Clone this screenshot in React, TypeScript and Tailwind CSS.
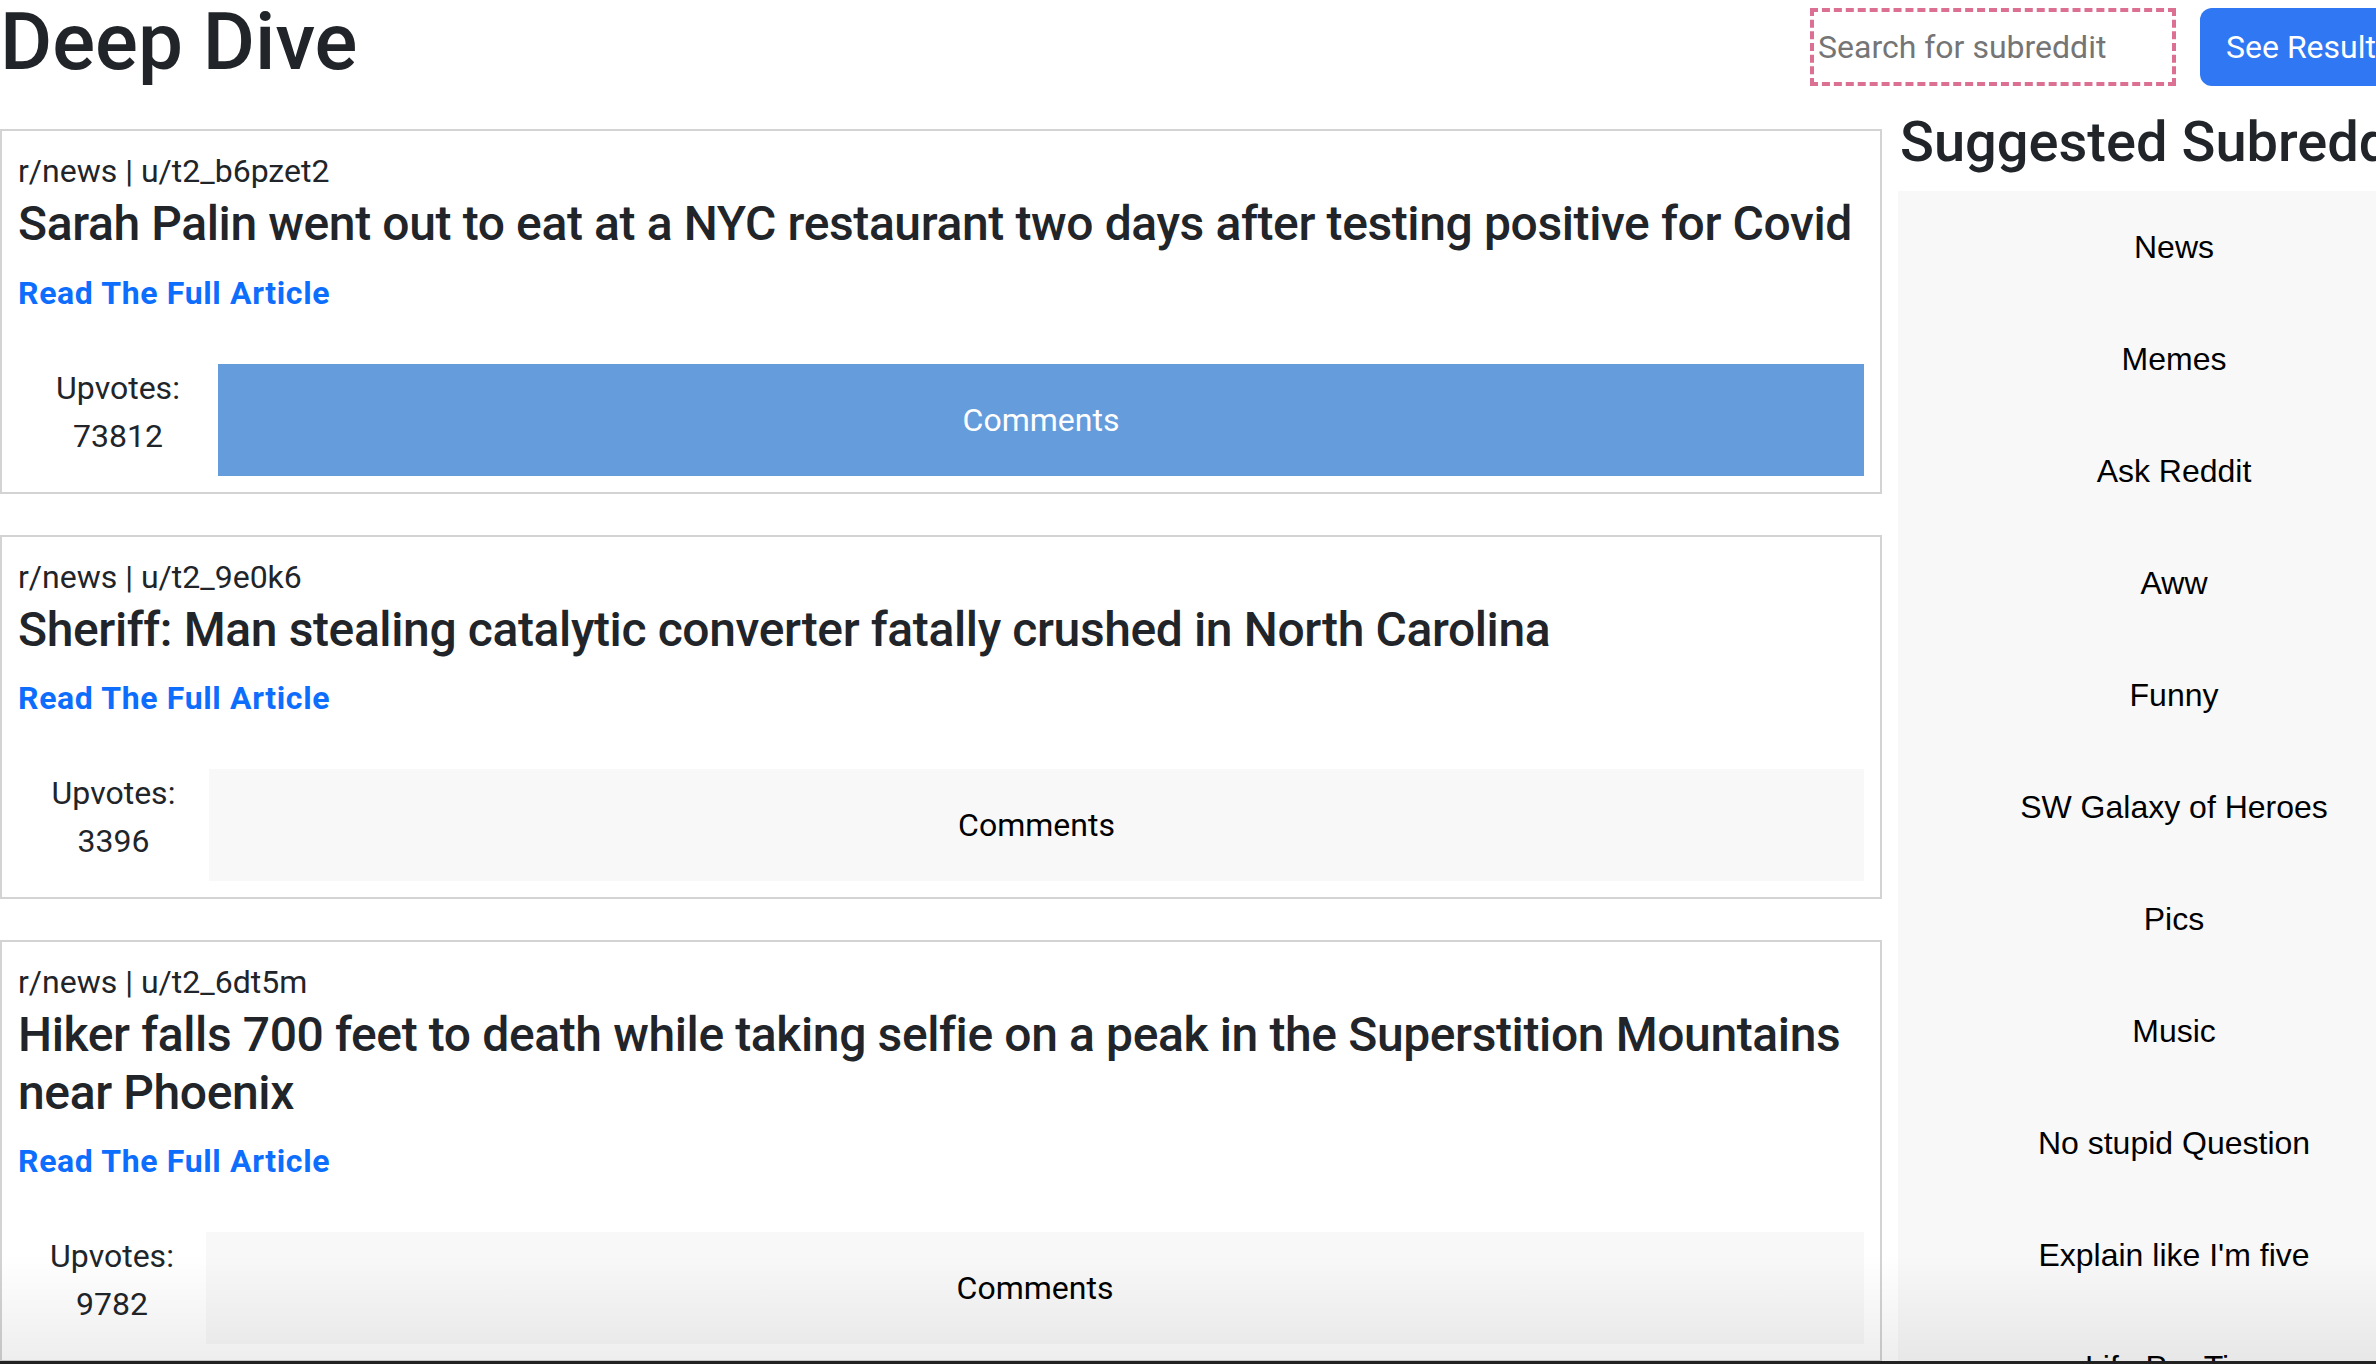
import React from 'react';

interface Post {
  sub: string;
  user: string;
  title: string;
  upvotes: number;
  colWidth: string;
  active: boolean;
}

const posts: Post[] = [
  {
    sub: 'r/news',
    user: 'u/t2_b6pzet2',
    title: 'Sarah Palin went out to eat at a NYC restaurant two days after testing positive for Covid',
    upvotes: 73812,
    colWidth: 'w-[200px]',
    active: true,
  },
  {
    sub: 'r/news',
    user: 'u/t2_9e0k6',
    title: 'Sheriff: Man stealing catalytic converter fatally crushed in North Carolina',
    upvotes: 3396,
    colWidth: 'w-[191px]',
    active: false,
  },
  {
    sub: 'r/news',
    user: 'u/t2_6dt5m',
    title: 'Hiker falls 700 feet to death while taking selfie on a peak in the Superstition Mountains near Phoenix',
    upvotes: 9782,
    colWidth: 'w-[188px]',
    active: false,
  },
];

const subreddits = [
  'News',
  'Memes',
  'Ask Reddit',
  'Aww',
  'Funny',
  'SW Galaxy of Heroes',
  'Pics',
  'Music',
  'No stupid Question',
  "Explain like I'm five",
  'Life Pro Tips',
];

const PostCard: React.FC<{ post: Post }> = ({ post }) => (
  <div className="border-2 border-[#d3d3d3] bg-white px-4 pt-4 pb-4 mb-[41px]">
    <p className="text-[32px] leading-[48px]">
      {post.sub} | {post.user}
    </p>
    <h4 className="text-[48px] leading-[1.2] font-medium tracking-[-0.008em] mb-4">{post.title}</h4>
    <a href="#" className="block text-[32px] leading-[48px] font-bold tracking-[0.02em] text-[#0d6efd]">
      Read The Full Article
    </a>
    <div className="mt-[47px] flex items-start">
      <div className={`${post.colWidth} shrink-0 text-center text-[32px] leading-[48px]`}>
        <p>Upvotes:</p>
        <p>{post.upvotes}</p>
      </div>
      <button
        className={`flex-1 h-[112px] flex items-center justify-center text-[32px] ${
          post.active ? 'bg-[#659cdc] text-white' : 'bg-[#f8f8f8] text-black'
        }`}
      >
        Comments
      </button>
    </div>
  </div>
);

export default function App() {
  return (
    <div className="relative w-screen h-screen overflow-hidden bg-white text-[#212529] font-['Roboto',sans-serif]">
      <div className="w-[2450px]">
        {/* header */}
        <div className="h-[96px] flex items-start">
          <h1 className="text-[80px] leading-[84px] font-medium">Deep Dive</h1>
          <div className="ml-auto mt-[8px] flex items-center gap-6">
            <input
              placeholder="Search for subreddit"
              className="w-[366px] h-[78px] border-4 border-dashed border-[#db7093] px-1 text-[32px] placeholder:text-[#757575] outline-none"
            />
            <button className="w-[250px] h-[78px] rounded-[12px] bg-[#3077f3] text-white text-[32px] text-left px-[26px]">
              See Results
            </button>
          </div>
        </div>

        <div className="flex items-start gap-4">
          {/* posts */}
          <div className="w-[1882px] shrink-0 mt-[33px]">
            {posts.map(p => (
              <PostCard key={p.user} post={p} />
            ))}
          </div>

          {/* sidebar */}
          <div className="w-[552px] shrink-0 mt-[13px]">
            <h2 className="text-[56px] leading-[1.2] font-medium mb-[15px] pl-[2px] whitespace-nowrap">Suggested Subreddits</h2>
            <div className="bg-[#f8f8f8] font-['Liberation_Sans',Arial,sans-serif] text-black">
              {subreddits.map(s => (
                <div key={s} className="h-[112px] flex items-center justify-center text-[32px]">
                  {s}
                </div>
              ))}
            </div>
          </div>
        </div>
      </div>

      {/* bottom screen shading */}
      <div className="pointer-events-none absolute inset-x-0 bottom-0 h-[110px] bg-gradient-to-b from-transparent to-black/[0.07]" />
      <div className="absolute inset-x-0 bottom-0 h-[3px] bg-[#222]" />
    </div>
  );
}
